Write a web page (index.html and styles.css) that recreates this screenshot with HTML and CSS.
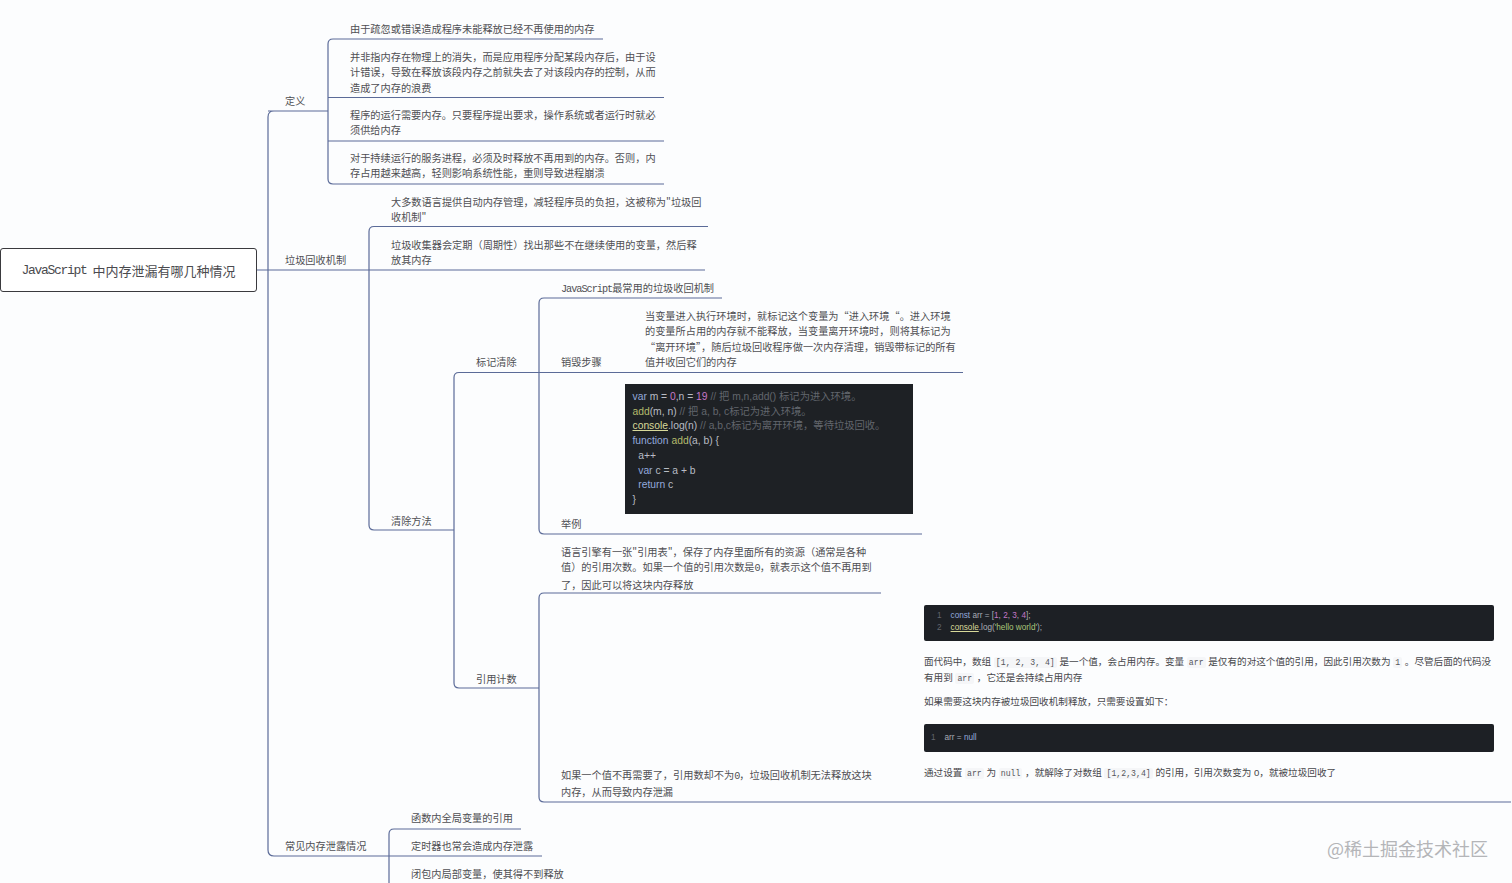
FILE: index.html
```html
<!DOCTYPE html>
<html lang="zh-CN">
<head>
<meta charset="utf-8">
<title>JavaScript 中内存泄漏有哪几种情况</title>
<link rel="stylesheet" href="styles.css">
</head>
<body>
<main class="canvas">
  <svg class="links" width="1512" height="883" viewBox="0 0 1512 883" fill="none">
    <g class="link">
      <path d="M256 270H369"/>
      <path d="M328 111H268Q268 111 268 111M328 111H274Q268 111 268 117V850Q268 856 274 856H389"/>
      <path d="M603 39H333Q328 39 328 44V179Q328 184 333 184H664"/>
      <path d="M328 97.5H664M328 141H664"/>
      <path d="M708 226.5H374Q369 226.5 369 231.5V525Q369 530 374 530H454"/>
      <path d="M369 270H705"/>
      <path d="M963 372.5H459Q454 372.5 454 377.5V683Q454 688 459 688H539"/>
      <path d="M722 298H544Q539 298 539 303V529Q539 534 544 534H922"/>
      <path d="M881 593H544Q539 593 539 598V797Q539 802 544 802H1511"/>
      <path d="M521 829H394Q389 829 389 834V883"/>
      <path d="M389 856H542"/>
    </g>
  </svg>

  <div class="root"><span class="lat">JavaScript</span>&nbsp;&nbsp;中内存泄漏有哪几种情况</div>

  <div class="node n-def">定义</div>
  <div class="node d1">由于疏忽或错误造成程序未能释放已经不再使用的内存</div>
  <div class="node d2">并非指内存在物理上的消失，而是应用程序分配某段内存后，由于设<br>计错误，导致在释放该段内存之前就失去了对该段内存的控制，从而<br>造成了内存的浪费</div>
  <div class="node d3">程序的运行需要内存。只要程序提出要求，操作系统或者运行时就必<br>须供给内存</div>
  <div class="node d4">对于持续运行的服务进程，必须及时释放不再用到的内存。否则，内<br>存占用越来越高，轻则影响系统性能，重则导致进程崩溃</div>

  <div class="node n-gc">垃圾回收机制</div>
  <div class="node g1">大多数语言提供自动内存管理，减轻程序员的负担，这被称为"垃圾回<br>收机制"</div>
  <div class="node g2">垃圾收集器会定期（周期性）找出那些不在继续使用的变量，然后释<br>放其内存</div>
  <div class="node n-clear">清除方法</div>

  <div class="node n-mark">标记清除</div>
  <div class="node m1"><span class="lat">JavaScript</span>最常用的垃圾收回机制</div>
  <div class="node m2">销毁步骤</div>
  <div class="node m3">当变量进入执行环境时，就标记这个变量为“进入环境“。进入环境<br>的变量所占用的内存就不能释放，当变量离开环境时，则将其标记为<br>“离开环境”，随后垃圾回收程序做一次内存清理，销毁带标记的所有<br>值并收回它们的内存</div>
  <div class="node m4">举例</div>
  <pre class="code-large"><span class="kw">var</span> m = <span class="num">0</span>,n = <span class="num">19</span> <span class="cm">// 把 m,n,add() 标记为进入环境。</span>
<span class="fn">add</span>(m, n) <span class="cm">// 把 a, b, c标记为进入环境。</span>
<span class="obj">console</span>.log(n) <span class="cm">// a,b,c标记为离开环境，等待垃圾回收。</span>
<span class="kw">function</span> <span class="fn">add</span>(a, b) {
  a++
  <span class="kw">var</span> c = a + b
  <span class="kw">return</span> c
}</pre>

  <div class="node n-count">引用计数</div>
  <div class="node r1">语言引擎有一张"引用表"，保存了内存里面所有的资源（通常是各种<br>值）的引用次数。如果一个值的引用次数是<span class="lat">0</span>，就表示这个值不再用到<br>了，因此可以将这块内存释放</div>
  <div class="node r2">如果一个值不再需要了，引用数却不为<span class="lat">0</span>，垃圾回收机制无法释放这块<br>内存，从而导致内存泄漏</div>

  <section class="panel">
    <div class="code-small two-lines">
      <div class="code-line"><span class="ln">1</span><span><span class="kw">const</span> arr = [<span class="num">1</span>, <span class="num">2</span>, <span class="num">3</span>, <span class="num">4</span>];</span></div>
      <div class="code-line"><span class="ln">2</span><span><span class="obj">console</span>.log(<span class="str">'hello world'</span>);</span></div>
    </div>
    <p class="para first">面代码中，数组 <code>[1, 2, 3, 4]</code> 是一个值，会占用内存。变量 <code>arr</code> 是仅有的对这个值的引用，因此引用次数为 <code>1</code> 。尽管后面的代码没有用到 <code>arr</code> ，它还是会持续占用内存</p>
    <p class="para second">如果需要这块内存被垃圾回收机制释放，只需要设置如下：</p>
    <div class="code-small one-line">
      <div class="code-line"><span class="ln">1</span><span>arr = <span class="kw">null</span></span></div>
    </div>
    <p class="para third">通过设置 <code>arr</code> 为 <code>null</code> ，就解除了对数组 <code>[1,2,3,4]</code> 的引用，引用次数变为 0，就被垃圾回收了</p>
  </section>

  <div class="node n-common">常见内存泄露情况</div>
  <div class="node c1">函数内全局变量的引用</div>
  <div class="node c2">定时器也常会造成内存泄露</div>
  <div class="node c3">闭包内局部变量，使其得不到释放</div>

  <div class="watermark">@稀土掘金技术社区</div>
</main>
</body>
</html>
```

FILE: styles.css
```css
html, body {
  margin: 0;
  padding: 0;
  background: #fcfdfe;
}

.canvas {
  position: relative;
  width: 1512px;
  height: 883px;
  overflow: hidden;
  background: #fcfdfe;
  font-family: "Noto Sans CJK SC", "Liberation Sans", sans-serif;
}

.links {
  position: absolute;
  left: 0;
  top: 0;
}

.link path {
  stroke: #5b6b98;
  stroke-width: 1.2;
}

.root {
  position: absolute;
  left: 0;
  top: 248px;
  box-sizing: border-box;
  width: 257px;
  height: 44px;
  border: 1.6px solid #3a3a3e;
  border-radius: 3px;
  background: #fff;
  display: flex;
  align-items: center;
  justify-content: center;
  font-size: 13px;
  color: #4a4a4e;
  white-space: nowrap;
}

.root .lat {
  font-size: 13px;
  letter-spacing: -1.3px;
}

.lat {
  font-family: "Liberation Mono", monospace;
  letter-spacing: -1px;
}

.node {
  position: absolute;
  font-size: 10.2px;
  line-height: 15.4px;
  color: #4f4f53;
  white-space: nowrap;
}

.n-def { left: 285px; top: 93px; }
.d1 { left: 350px; top: 21px; }
.d2 { left: 350px; top: 49px; }
.d3 { left: 350px; top: 107px; }
.d4 { left: 350px; top: 150px; }

.n-gc { left: 285px; top: 251.5px; }
.g1 { left: 391px; top: 193.5px; }
.g2 { left: 391px; top: 236.5px; }
.n-clear { left: 391px; top: 512.5px; }

.n-mark { left: 476px; top: 354px; }
.m1 { left: 561px; top: 280px; }
.m2 { left: 561px; top: 354px; }
.m3 { left: 645px; top: 308px; }
.m4 { left: 561px; top: 516px; }

.n-count { left: 476px; top: 671px; }
.r1 { left: 561px; top: 544px; }
.r2 { left: 561px; top: 767px; }

.n-common { left: 285px; top: 838px; }
.c1 { left: 411px; top: 810px; }
.c2 { left: 411px; top: 838px; }
.c3 { left: 411px; top: 866px; }

.code-large {
  position: absolute;
  left: 625px;
  top: 384px;
  box-sizing: border-box;
  width: 288px;
  height: 130px;
  margin: 0;
  padding: 6px 7.5px;
  background: #1e2125;
  color: #b8bcc4;
  font-family: "Liberation Sans", "Noto Sans CJK SC", sans-serif;
  font-size: 10.3px;
  line-height: 14.7px;
  white-space: pre;
}

.kw { color: #93a9dc; }
.num { color: #c678c8; }
.cm { color: #62666d; }
.fn { color: #b4bb6c; }
.str { color: #a9c77a; }
.obj { color: #d8d99a; text-decoration: underline; }

.panel {
  position: absolute;
  left: 924px;
  top: 605px;
  width: 570px;
  display: flex;
  flex-direction: column;
  font-family: "Liberation Sans", "Noto Sans CJK SC", sans-serif;
}

.code-small {
  box-sizing: border-box;
  background: #1d2025;
  border-radius: 2px;
  color: #a9adb5;
  font-size: 8.2px;
  line-height: 12px;
}

.two-lines {
  height: 36px;
  padding: 4.5px 13px;
}

.one-line {
  height: 28px;
  margin-top: 14px;
  padding: 8px 7px;
}

.code-line {
  display: flex;
  gap: 9px;
  white-space: pre;
}

.ln {
  color: #62666d;
}

.para {
  margin: 0;
  font-size: 9.6px;
  line-height: 14.5px;
  color: #47474b;
}

.first { margin-top: 14px; }
.second { margin-top: 9px; }
.third { margin-top: 14px; }

.para code {
  font-family: "Liberation Mono", monospace;
  font-size: 8.2px;
  background: #f5f6f8;
  color: #55575c;
  padding: 1px 2px;
  border-radius: 2px;
}

.watermark {
  position: absolute;
  left: 1327px;
  top: 835px;
  font-size: 18px;
  line-height: 26px;
  color: #b4b5b8;
  white-space: nowrap;
}
```
